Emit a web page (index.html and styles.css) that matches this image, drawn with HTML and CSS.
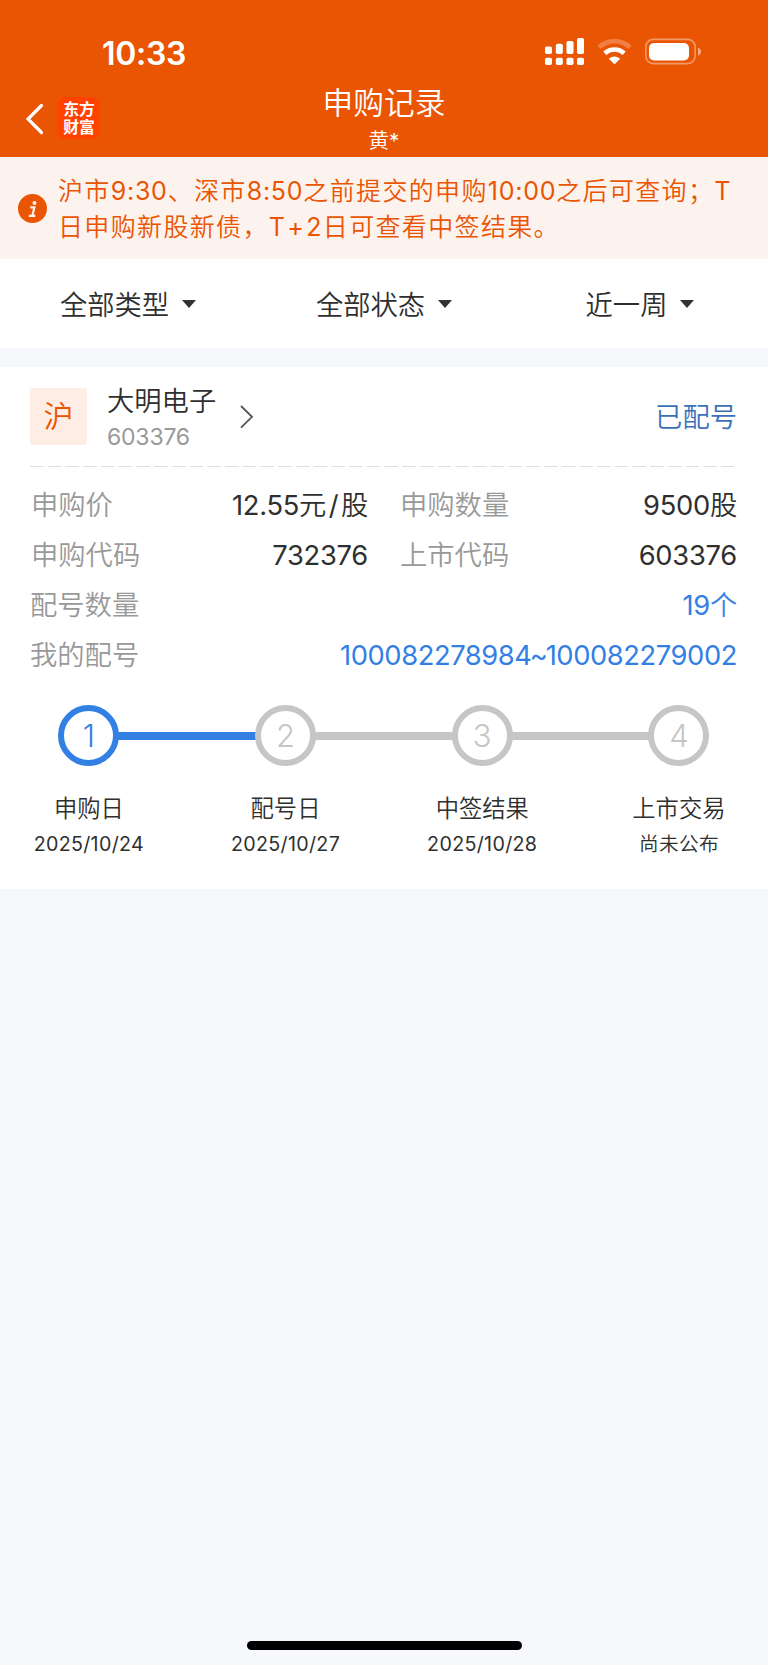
FILE: index.html
```html
<!DOCTYPE html>
<html lang="zh-CN">
<head>
<meta charset="utf-8">
<title>申购记录</title>
<link rel="stylesheet" href="styles.css">
</head>
<body>
<div class="screen">
  <header class="header">
    <div class="status-bar">
      <span class="clock">10:33</span>
      <svg class="status-icons" width="160" height="30" viewBox="0 0 160 30">
        <g fill="#fff">
          <rect x="1" y="10.5" width="7" height="7.5" rx="1.8"/>
          <rect x="11.8" y="7.8" width="7" height="10.2" rx="1.8"/>
          <rect x="22.5" y="5" width="7" height="13" rx="1.8"/>
          <rect x="33" y="2" width="7" height="16" rx="1.8"/>
          <rect x="1" y="21.8" width="7" height="7.2" rx="1.8"/>
          <rect x="11.8" y="21.8" width="7" height="7.2" rx="1.8"/>
          <rect x="22.5" y="21.8" width="7" height="7.2" rx="1.8"/>
          <rect x="33" y="21.8" width="7" height="7.2" rx="1.8"/>
          <path d="M65.4 22.3Q70.5 18.8 75.6 22.3Q76 22.8 75.6 23.3L71.1 27.7Q70.5 28.2 69.9 27.7L65.4 23.3Q65 22.8 65.4 22.3Z"/>
        </g>
        <path d="M60.8 17.2A14.5 14.5 0 0 1 80.2 17.2" fill="none" stroke="#fff" stroke-width="4.6"/>
        <path d="M55 11.3A22.5 22.5 0 0 1 86 11.3" fill="none" stroke="#fff" stroke-opacity=".25" stroke-width="4.6"/>
        <rect x="101.8" y="3.4" width="49.4" height="24.2" rx="7.5" fill="none" stroke="#fff" stroke-opacity=".4" stroke-width="1.6"/>
        <rect x="105" y="7" width="40" height="17.4" rx="5" fill="#fff"/>
        <path d="M154 11.5Q157 12.8 157 15.6T154 19.7Z" fill="#fff" fill-opacity=".5"/>
      </svg>
    </div>
    <div class="nav-bar">
      <div class="nav-left">
        <svg class="back" width="19" height="32" viewBox="0 0 19 32"><path d="M16.5 2.5L3 16L16.5 29.5" fill="none" stroke="#fff" stroke-width="3.2" stroke-linecap="round" stroke-linejoin="miter"/></svg>
        <div class="logo">东方<br>财富</div>
      </div>
      <div class="nav-title">
        <h1 class="title">申购记录</h1>
        <div class="account">黄*</div>
      </div>
    </div>
  </header>

  <section class="notice">
    <svg class="notice-icon" width="29" height="29" viewBox="0 0 29 29">
      <circle cx="14.5" cy="14.5" r="14.5" fill="#ea5504"/>
      <circle cx="16.5" cy="9" r="2" fill="#fdf3ee"/>
      <path d="M12.3 13.4H16.4L14.4 21.6M10.8 21.8H17.4" fill="none" stroke="#fdf3ee" stroke-width="2.2"/>
    </svg>
    <p class="notice-text">沪市<span class="time">9:30</span>、深市<span class="time">8:50</span>之前提交的申购<span class="time">10:00</span>之后可查询；T<br>日申购新股新债，T<span class="plus">+</span>2日可查看中签结果。</p>
  </section>

  <nav class="filters">
    <div class="filter">全部类型<i class="caret"></i></div>
    <div class="filter">全部状态<i class="caret"></i></div>
    <div class="filter">近一周<i class="caret"></i></div>
  </nav>

  <main class="card">
    <div class="stock">
      <div class="market">沪</div>
      <div class="stock-info">
        <div class="stock-name">大明电子</div>
        <div class="stock-code">603376</div>
      </div>
      <svg class="chevron" width="14" height="26" viewBox="0 0 14 26"><path d="M1 2L12 12.8L1 23.6" fill="none" stroke="#555" stroke-width="1.8"/></svg>
      <div class="stock-status">已配号</div>
    </div>
    <svg class="divider" width="706" height="2" viewBox="0 0 706 2"><path d="M0 .5H704" stroke="#dedede" stroke-width="1" stroke-dasharray="13.7 4.02"/></svg>
    <div class="details">
      <div class="detail"><span class="label inset">申购价</span><span class="value">12.55元<span class="slash">/</span>股</span></div>
      <div class="detail"><span class="label">申购数量</span><span class="value">9500股</span></div>
      <div class="detail"><span class="label inset">申购代码</span><span class="value">732376</span></div>
      <div class="detail"><span class="label">上市代码</span><span class="value">603376</span></div>
      <div class="detail wide"><span class="label">配号数量</span><span class="value link">19个</span></div>
      <div class="detail wide"><span class="label">我的配号</span><span class="value link range">100082278984<span class="tilde">~</span>100082279002</span></div>
    </div>
    <div class="steps">
      <div class="step active"><div class="track"><span class="circle">1</span></div><div class="step-name">申购日</div><div class="step-date">2025/10/24</div></div>
      <div class="step"><div class="track"><span class="circle">2</span></div><div class="step-name">配号日</div><div class="step-date">2025/10/27</div></div>
      <div class="step"><div class="track"><span class="circle">3</span></div><div class="step-name">中签结果</div><div class="step-date">2025/10/28</div></div>
      <div class="step"><div class="track"><span class="circle">4</span></div><div class="step-name">上市交易</div><div class="step-date">尚未公布</div></div>
    </div>
  </main>
  <footer class="home"><div class="home-bar"></div></footer>
</div>
</body>
</html>
```
FILE: styles.css
```css
* { box-sizing: border-box; }
body {
  margin: 0;
  background: #f6f8fb;
  color: #2f2f2f;
  font-family: Inter, "Noto Sans CJK SC DemiLight", "Noto Sans CJK SC", sans-serif;
  font-size: 27.3px;
  font-weight: 400;
}
.screen {
  width: 768px;
  height: 1665px;
  display: flex;
  flex-direction: column;
}

.header { height: 157px; background: #ea5504; color: #fff; }
.status-bar {
  height: 84px;
  padding: 36px 64px 0 102px;
  display: flex;
  justify-content: space-between;
}
.clock { font-size: 32px; font-weight: 600; line-height: 35px; letter-spacing: -0.3px; }
.status-icons { display: block; }
.nav-bar { display: grid; grid-template-columns: 250px 1fr 250px; }
.nav-left { display: flex; align-items: flex-start; padding: 13px 0 0 25px; }
.back { margin-top: 6px; }
.logo {
  width: 42px;
  height: 42px;
  margin-left: 14px;
  padding-top: 3px;
  border-radius: 8px;
  background: #ff4200;
  text-align: center;
  font: 700 15.8px/18px "Noto Sans CJK SC", sans-serif;
}
.nav-title { text-align: center; }
.title { margin: 0; font-size: 30.7px; font-weight: 350; line-height: 37px; }
.account { font-size: 20.5px; line-height: 28px; margin-top: 6px; }

.notice {
  height: 102px;
  padding: 0 0 0 18px;
  background: #fdf3ee;
  display: flex;
  align-items: center;
  color: #ea5504;
}
.notice-icon { flex: none; margin-right: 11px; }
.notice-text {
  margin: 2px 0 0;
  font-size: 25px;
  line-height: 36px;
  letter-spacing: 1.35px;
  white-space: nowrap;
}
.time { letter-spacing: 0.75px; }
.plus { margin: 0 1px; }

.filters { height: 89px; background: #fff; display: grid; grid-template-columns: repeat(3, 1fr); }
.filter { display: flex; align-items: center; justify-content: center; gap: 13px; padding-bottom: 2px; }
.caret { margin-top: 2px; border: 7px solid transparent; border-top: 8px solid #333; border-bottom: 0; }

.card { height: 522px; margin-top: 19px; padding: 18px 31px 0 30px; background: #fff; }
.stock { height: 80px; display: flex; align-items: flex-start; }
.market {
  width: 57px;
  height: 57px;
  margin-top: 3px;
  border-radius: 3px;
  background: #feede4;
  color: #ea5504;
  font-size: 30px;
  line-height: 56px;
  text-align: center;
}
.stock-info { margin-left: 20px; }
.stock-name { line-height: 34px; }
.stock-code { font-size: 23px; line-height: 36px; letter-spacing: -0.2px; color: #999; }
.chevron { margin: 19px 0 0 23.5px; }
.stock-status { margin-left: auto; line-height: 66px; color: #3b70b8; }
.divider { display: block; margin-top: 1px; }
.details {
  padding-top: 13px;
  display: grid;
  grid-template-columns: 338px 337px;
  column-gap: 32px;
}
.detail { height: 50px; display: flex; justify-content: space-between; line-height: 50px; }
.wide { grid-column: span 2; }
.label { color: #999; }
.inset { padding-left: 1px; }
.value { color: #2f2f2f; white-space: nowrap; letter-spacing: -0.25px; }
.slash { margin: 0 2.6px; }
.link { color: #3280e4; }
.range { letter-spacing: -0.4px; }
.tilde { margin: 0 -1.8px; }

.steps {
  margin: 24px -50px 0 -39.5px;
  display: grid;
  grid-template-columns: repeat(4, 196.7px);
  text-align: center;
}
.step { --line: #c6c6c6; }
.active { --line: #3280e4; }
.track { display: flex; justify-content: center; position: relative; }
.step:not(:last-child) .track::after {
  content: "";
  position: absolute;
  left: calc(50% + 28px);
  top: 27px;
  width: 140px;
  height: 8px;
  background: var(--line);
}
.circle {
  width: 61px;
  height: 61px;
  border: 6px solid var(--line);
  border-radius: 50%;
  color: var(--line);
  font-size: 31px;
  font-weight: 300;
  line-height: 49px;
}
.step-name { margin-top: 26px; font-size: 23.3px; line-height: 34px; }
.step-date { margin-top: 3px; font-size: 19.7px; line-height: 30px; letter-spacing: 0.3px; }

.home { margin-top: auto; padding-bottom: 15px; display: flex; justify-content: center; }
.home-bar { width: 275px; height: 9px; border-radius: 5px; background: #000; }
```
